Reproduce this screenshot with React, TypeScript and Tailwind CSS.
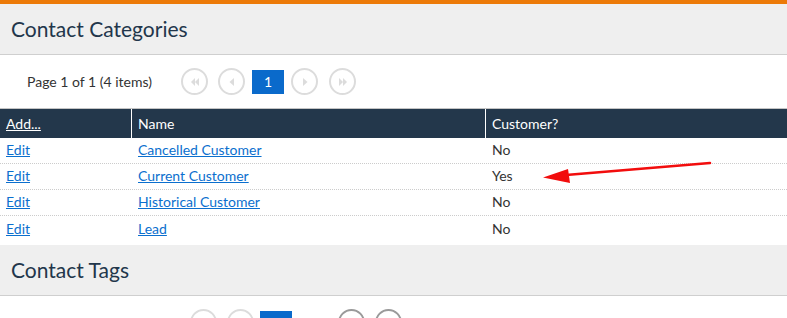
import { ReactNode } from 'react';

const rows = [
  { name: 'Cancelled Customer', customer: 'No' },
  { name: 'Current Customer', customer: 'Yes' },
  { name: 'Historical Customer', customer: 'No' },
  { name: 'Lead', customer: 'No' },
];

function PagerCircle({ dir, enabled = false }: { dir: 'first' | 'prev' | 'next' | 'last'; enabled?: boolean }) {
  const c = enabled ? '#9a9a9a' : '#dcdcdc';
  return (
    <span
      className="flex h-[27px] w-[27px] items-center justify-center rounded-full border-2"
      style={{ borderColor: c }}
    >
      <svg width="12" height="10" viewBox="0 0 12 10" fill={c}>
        {dir === 'prev' && <polygon points="8,1 8,9 3.5,5" />}
        {dir === 'next' && <polygon points="4,1 4,9 8.5,5" />}
        {dir === 'first' && (
          <>
            <polygon points="6,1 6,9 2,5" />
            <polygon points="10,1 10,9 6,5" />
          </>
        )}
        {dir === 'last' && (
          <>
            <polygon points="2,1 2,9 6,5" />
            <polygon points="6,1 6,9 10,5" />
          </>
        )}
      </svg>
    </span>
  );
}

function SectionHeader({ children }: { children: ReactNode }) {
  return (
    <div className="flex h-[51px] items-center border-b border-[#cfcfcf] bg-[#efefef] pl-[11px]">
      <h2 className="pb-[2px] text-[21px] leading-none text-[#22364b]">{children}</h2>
    </div>
  );
}

export default function App() {
  return (
    <div
      className="relative h-[318px] w-[787px] overflow-hidden bg-white text-[14px] text-[#333]"
      style={{ fontFamily: 'Lato, "Noto Sans", sans-serif' }}
    >
      <div className="h-[4px] bg-[#ec7a08]" />
      <SectionHeader>Contact Categories</SectionHeader>

      {/* Pager */}
      <div className="flex h-[53px] items-center">
        <span className="ml-[27px] w-[154px] text-[14px] text-[#333]">Page 1 of 1 (4 items)</span>
        <div className="flex items-center">
          <PagerCircle dir="first" />
          <span className="ml-[10px]"><PagerCircle dir="prev" /></span>
          <span className="ml-[7px] flex h-[24px] w-[32px] items-center justify-center bg-[#0a6acb] text-[14px] text-white">1</span>
          <span className="ml-[7px]"><PagerCircle dir="next" /></span>
          <span className="ml-[11px]"><PagerCircle dir="last" /></span>
        </div>
      </div>

      {/* Table */}
      <div className="border-t border-[#c4c4c4]">
        <div className="flex h-[29px] items-center bg-[#23374b] text-white">
          <div className="flex h-full w-[132px] items-center border-r border-white pl-[6px]">
            <a className="underline">Add...</a>
          </div>
          <div className="flex h-full w-[354px] items-center border-r border-white pl-[6px]">Name</div>
          <div className="flex h-full flex-1 items-center pl-[6px]">Customer?</div>
        </div>
        {rows.map((r, i) => (
          <div
            key={r.name}
            className={`flex h-[26px] items-center pb-[2px] ${i < rows.length - 1 ? 'border-b border-dotted border-[#cccccc]' : ''}`}
          >
            <div className="w-[132px] pl-[6px]">
              <a className="text-[#0b6fce] underline">Edit</a>
            </div>
            <div className="w-[354px] pl-[6px]">
              <a className="text-[#0b6fce] underline">{r.name}</a>
            </div>
            <div className="flex-1 pl-[6px] text-[#333]">{r.customer}</div>
          </div>
        ))}
      </div>

      <div className="mt-[3px]">
        <SectionHeader>Contact Tags</SectionHeader>
        <div className="flex h-[53px] items-center">
          <span className="ml-[27px] w-[163px] self-end pt-[40px] text-[14px] text-[#333]"></span>
          <div className="flex items-center">
            <PagerCircle dir="first" />
            <span className="ml-[10px]"><PagerCircle dir="prev" /></span>
            <span className="ml-[6px] h-[24px] w-[32px] bg-[#0a6acb]" />
            <span className="w-[46px]" />
            <PagerCircle dir="next" enabled />
            <span className="ml-[10px]"><PagerCircle dir="last" enabled /></span>
          </div>
        </div>
      </div>

      {/* Annotation arrow */}
      <svg className="absolute left-0 top-0" width="787" height="318" viewBox="0 0 787 318">
        <line x1="710" y1="163" x2="560" y2="175.5" stroke="#f20d0d" strokeWidth="2.5" strokeLinecap="round" />
        <polygon points="543,177.5 568,169 570,183" fill="#f20d0d" />
      </svg>
    </div>
  );
}
